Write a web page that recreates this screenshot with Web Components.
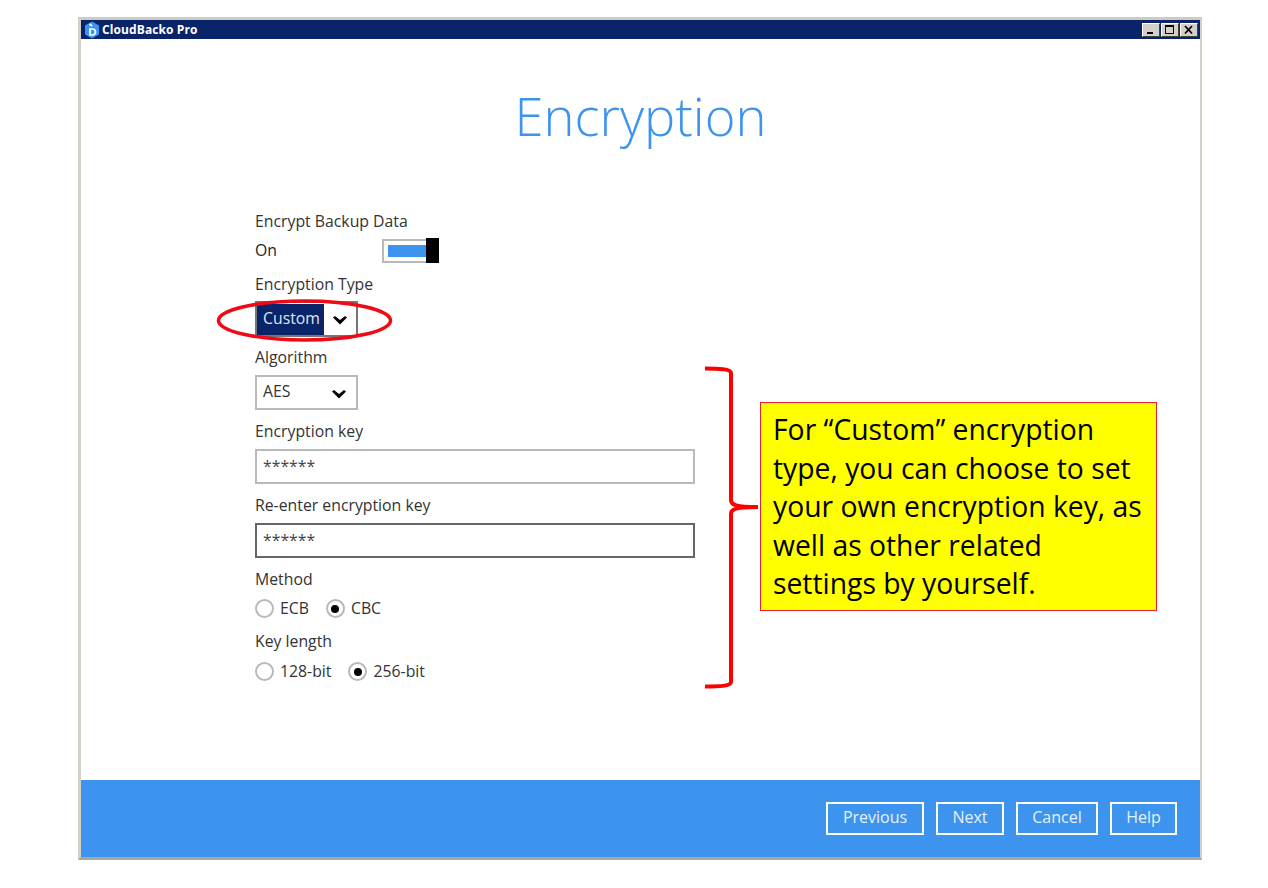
<!DOCTYPE html>
<html>
<head>
<meta charset="utf-8">
<title>Encryption</title>
<style>
html, body { margin: 0; padding: 0; background: #fff; }
body { width: 1268px; height: 888px; position: relative; overflow: hidden; font-family: "Open Sans", sans-serif; }
</style>
</head>
<body>
<app-window title="CloudBacko Pro">
  <h-title>Encryption</h-title>
  <enc-form></enc-form>
  <wiz-btn slot="footer" w="99">Previous</wiz-btn>
  <wiz-btn slot="footer" w="69">Next</wiz-btn>
  <wiz-btn slot="footer" w="83">Cancel</wiz-btn>
  <wiz-btn slot="footer" w="68">Help</wiz-btn>
</app-window>
<note-overlay>For “Custom” encryption type, you can choose to set your own encryption key, as well as other related settings by yourself.</note-overlay>

<script>
function define(name, html, init) {
  customElements.define(name, class extends HTMLElement {
    constructor() {
      super();
      this.attachShadow({ mode: "open" });
      this.shadowRoot.innerHTML = html;
      if (init) init(this);
    }
  });
}

define("app-window", `
<style>
:host { display: flex; flex-direction: column; box-sizing: border-box; position: absolute; left: 78px; top: 17px; width: 1124px; height: 843px;
  border: 3px solid #d4d0c8; border-right-width: 2px; border-top-color: #cfcbc3; border-bottom-color: #a9a6a0; background: #fff; }
.bar { height: 19px; margin-bottom: 1px; background: #0a246a; color: #fff; display: flex; align-items: center; padding: 0 2px 0 3px; flex: none; }
.bar span { font: 700 12px "Open Sans", sans-serif; margin-left: 2px; flex: 1; letter-spacing: .1px; }
.bar svg.logo { display: block; }
.ctl { display: flex; gap: 1px; }
.ctl i { display: block; width: 18px; height: 14px; box-sizing: border-box; background: #d4d0c8; border: 1px solid; border-color: #fff #404040 #404040 #fff; }
.ctl svg { display: block; }
main { flex: 1; min-height: 0; }
footer { height: 77px; flex: none; background: #3d94ee; display: flex; justify-content: flex-end; align-items: center; gap: 12px; padding: 0 23px 1px 0; box-sizing: border-box; }
</style>
<div class="bar">
  <svg class="logo" width="16" height="18" viewBox="0 0 16 18"><path d="M8 0.500 15 4.500v9L8 17.500 1 13.500v-9z" fill="#3d94ee"/><path d="M5.500 3 8 5M6 8h2.500a3 3 0 0 1 0 6H6z" fill="none" stroke="#fff" stroke-width="1.700"/></svg>
  <span id="t"></span>
  <div class="ctl">
    <i><svg width="16" height="12"><rect x="4" y="8" width="6" height="2" fill="#000"/></svg></i>
    <i><svg width="16" height="12"><rect x="3.500" y="1.500" width="8" height="8" fill="none" stroke="#000"/><rect x="3" y="1" width="9" height="2" fill="#000"/></svg></i>
    <i><svg width="16" height="12"><path d="M4 2 11 9.500M11 2 4 9.500" stroke="#000" stroke-width="1.800"/></svg></i>
  </div>
</div>
<main><slot></slot></main>
<footer><slot name="footer"></slot></footer>
`, el => { el.shadowRoot.getElementById("t").textContent = el.getAttribute("title"); });

define("h-title", `
<style>:host { display: block; text-align: center; color: #3d94ee; font: 300 52.500px/68px "Open Sans", sans-serif; padding-top: 42px; height: 68px; }</style>
<slot></slot>`);

define("wiz-btn", `
<style>
:host { display: flex; align-items: center; justify-content: center; box-sizing: border-box; height: 33px; border: 2px solid #fff; color: #e6f1fd; font: 16px "Open Sans", sans-serif; padding-bottom: 2px; }
</style><slot></slot>`, el => { el.style.width = (el.getAttribute("w") - 1) + "px"; });

define("f-label", `
<style>:host { display: block; font: 15.800px/20px "Open Sans", sans-serif; color: #333; }</style><slot></slot>`);

define("f-toggle", `
<style>
:host { display: flex; align-items: center; height: 24px; font: 500 15.800px "Open Sans", sans-serif; color: #222; }
span { padding-bottom: 2px; }
.sw { position: absolute; margin-left: 127px; width: 57px; height: 24px; box-sizing: border-box; border: 2px solid #b9b9b9; border-right: 0; padding: 4px; }
.sw b { display: block; height: 12px; width: 38px; background: #3d94ee; }
.sw u { position: absolute; right: 0; top: -3px; width: 13px; height: 25px; background: #000; }
</style>
<span><slot></slot></span><div class="sw"><b></b><u></u></div>`);

const chev = `<svg width="14" height="9" viewBox="0 0 14 9"><path d="M0 1.500 2 0 7 4 12 0 14 1.500 7 8.500z" fill="#000"/></svg>`;

define("f-select", `
<style>
:host { display: flex; box-sizing: border-box; width: 103px; height: 35px; border: 2px solid #b9b9b9; font: 15.800px "Open Sans", sans-serif; color: #333; align-items: stretch; }
:host([active]) { height: 36px; border-color: #777; padding-top: 1px; color: #dfe6f5; }
span { flex: 1; display: flex; align-items: center; padding-left: 6px; padding-bottom: 4px; }
:host([active]) span { background: #0a246a; flex: none; width: 61px; padding-bottom: 3px; }
em { display: flex; align-items: center; justify-content: center; width: 34px; margin-left: auto; padding-top: 4px; }
:host([active]) em { padding-top: 2px; }
</style>
<span><slot></slot></span><em>${chev}</em>`);

define("f-input", `
<style>
:host { display: block; box-sizing: border-box; width: 440px; height: 35px; border: 2px solid #b9b9b9; font: 15.800px/30px "Open Sans", sans-serif; color: #444; padding-left: 6px; }
:host([focus]) { border-color: #666; }
</style><slot></slot>`);

define("f-radio", `
<style>
:host { display: inline-flex; align-items: center; height: 20px; font: 15.800px/20px "Open Sans", sans-serif; color: #333; margin-right: 17px; }
i { display: block; width: 19px; height: 19px; box-sizing: border-box; border: 2px solid #b9b9b9; border-radius: 50%; margin: 1px 6px 0 0; position: relative; }
:host([on]) i::after { content: ""; position: absolute; left: 3.500px; top: 3.500px; width: 8px; height: 8px; border-radius: 50%; background: #000; }
</style><i></i><slot></slot>`);

define("enc-form", `
<style>
:host { display: block; padding: 61px 0 0 174px; }
.rd { height: 20px; display: flex; }
.a { height: 8px; } .b { height: 11px; }
</style>
<f-label>Encrypt Backup Data</f-label>
<div class="a"></div>
<f-toggle>On</f-toggle>
<div class="b"></div>
<f-label>Encryption Type</f-label>
<div style="height:7px"></div>
<f-select active>Custom</f-select>
<div style="height:10px"></div>
<f-label>Algorithm</f-label>
<div class="a"></div>
<f-select>AES</f-select>
<div class="b"></div>
<f-label>Encryption key</f-label>
<div class="a"></div>
<f-input>******</f-input>
<div class="b"></div>
<f-label>Re-enter encryption key</f-label>
<div class="a"></div>
<f-input focus>******</f-input>
<div class="b"></div>
<f-label>Method</f-label>
<div style="height:9px"></div>
<div class="rd"><f-radio>ECB</f-radio><f-radio on>CBC</f-radio></div>
<div style="height:13px"></div>
<f-label>Key length</f-label>
<div style="height:10px"></div>
<div class="rd"><f-radio>128-bit</f-radio><f-radio on>256-bit</f-radio></div>
`);

define("note-overlay", `
<style>
:host { display: block; position: absolute; left: 0; top: 0; width: 0; height: 0; }
svg { position: absolute; left: 0; top: 0; pointer-events: none; }
.box { position: absolute; left: 760px; top: 402px; width: 397px; height: 209px; box-sizing: border-box; border: 1px solid #e8202a; background: #ff0; color: #000; font: 28.300px/38.500px "Open Sans", sans-serif; padding: 7px 6px 0 12px; }
</style>
<svg width="1268" height="888">
  <ellipse cx="304.500" cy="320.500" rx="86" ry="19.500" fill="none" stroke="#ee0a16" stroke-width="3.500"/>
  <path d="M705 368.500C718 368.500 731 369 731 373V500C731 505 736 507 758 507C736 507 731 509 731 514V682C731 686 718 686.500 705 686.500" fill="none" stroke="#f00" stroke-width="4"/>
</svg>
<div class="box"><slot></slot></div>`);
</script>
</body>
</html>
